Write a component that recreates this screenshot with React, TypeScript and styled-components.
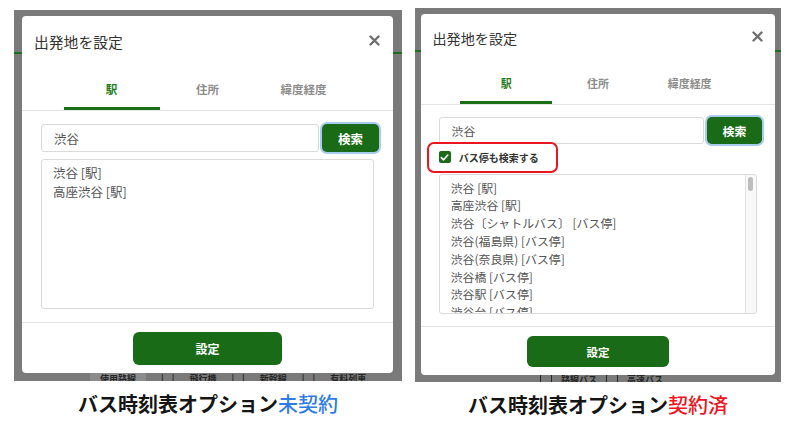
import React from 'react'
import styled, { createGlobalStyle } from 'styled-components'

// sizes inside a modal scale with --s (the right shot is a bit smaller)
const u = (n: number) => `calc(${n}px * var(--s))`

const GREEN = '#196b17'
const FONT = `"Liberation Sans", "Noto Sans CJK JP", sans-serif`

const GlobalStyle = createGlobalStyle`
     html, body {
          margin: 0;
          padding: 0;
          background: #fff;
          font-family: ${FONT};
     }
     * { box-sizing: border-box; }
`

const BUS_RESULTS = [
     '渋谷 [駅]',
     '高座渋谷 [駅]',
     '渋谷〔シャトルバス〕 [バス停]',
     '渋谷(福島県) [バス停]',
     '渋谷(奈良県) [バス停]',
     '渋谷橋 [バス停]',
     '渋谷駅 [バス停]',
     '渋谷台 [バス停]',
]

export default function App() {
     return (
          <>
               <GlobalStyle />
               <Page>
                    <Column $w={388}>
                         <Frame $top={10} $h={371} $pad="6px 9px 8px 8px">
                              <HeaderLine />
                              <SearchModal scale={1} results={['渋谷 [駅]', '高座渋谷 [駅]']} />
                              <Peek $left={76}>
                                   <PeekTab>使用路線</PeekTab>
                                   <Bars>| |</Bars>
                                   <span>飛行機</span>
                                   <Bars>| |</Bars>
                                   <span>新幹線</span>
                                   <Bars>| |</Bars>
                                   <span>有料列車</span>
                              </Peek>
                         </Frame>
                         <Caption>バス時刻表オプション<Accent $color="#2f7be6">未契約</Accent></Caption>
                    </Column>
                    <Column $w={366}>
                         <Frame $top={8} $h={374} $pad="6px 6px 7px 6px">
                              <HeaderLine />
                              <SearchModal scale={0.955} busOption results={BUS_RESULTS} />
                              <Peek $left={125}>
                                   <PeekBox />
                                   <span>路線バス</span>
                                   <PeekBox />
                                   <span>高速バス</span>
                              </Peek>
                         </Frame>
                         <Caption>バス時刻表オプション<Accent $color="#f0141e">契約済</Accent></Caption>
                    </Column>
               </Page>
          </>
     )
}

function SearchModal({ scale, busOption, results }: { scale: number, busOption?: boolean, results: string[] }) {
     return (
          <Modal $s={scale}>
               <Header>
                    <Title>出発地を設定</Title>
                    <Close>
                         <svg width="11" height="11" viewBox="0 0 11 11">
                              <path d="M1.5 1.5 L9.5 9.5 M9.5 1.5 L1.5 9.5" stroke="#6f6f6f" strokeWidth="2.4" strokeLinecap="round" />
                         </svg>
                    </Close>
               </Header>
               <TabBar>
                    <Tab $active>駅</Tab>
                    <Tab>住所</Tab>
                    <Tab>緯度経度</Tab>
               </TabBar>
               <Body>
                    <SearchRow>
                         <SearchInput defaultValue="渋谷" />
                         <SearchButton>検索</SearchButton>
                    </SearchRow>
                    {busOption && (
                         <CheckRow>
                              <CheckBox>
                                   <svg width="9" height="9" viewBox="0 0 9 9">
                                        <path d="M1.3 4.6 L3.6 6.8 L7.8 2" fill="none" stroke="#fff" strokeWidth="1.6" strokeLinecap="round" strokeLinejoin="round" />
                                   </svg>
                              </CheckBox>
                              バス停も検索する
                         </CheckRow>
                    )}
                    <Results $gap={busOption ? 0 : 7}>
                         {results.map((r, i) => <Item key={i}>{r}</Item>)}
                         {busOption && (
                              <ScrollTrack>
                                   <ScrollThumb />
                              </ScrollTrack>
                         )}
                    </Results>
               </Body>
               <Footer>
                    <SetButton>設定</SetButton>
               </Footer>
          </Modal>
     )
}

const Page = styled.div`
     display: flex;
     align-items: flex-start;
     gap: 13px;
     padding-left: 14px;
     width: 800px;
     height: 425px;
     overflow: hidden;
`

const Column = styled.div<{ $w: number }>`
     width: ${p => p.$w}px;
     display: flex;
     flex-direction: column;
     align-items: center;
`

const Frame = styled.div<{ $top: number, $h: number, $pad: string }>`
     position: relative;
     overflow: hidden;
     width: 100%;
     height: ${p => p.$h}px;
     margin-top: ${p => p.$top}px;
     padding: ${p => p.$pad};
     background: #7a7a7a;
`

const HeaderLine = styled.div`
     position: absolute;
     left: 0;
     right: 0;
     top: 42px;
     height: 2px;
     background: #1f6d1f;
`

const Peek = styled.div<{ $left: number }>`
     position: absolute;
     left: ${p => p.$left}px;
     bottom: -3px;
     display: flex;
     align-items: center;
     gap: 9px;
     height: 12px;
     font-size: 9px;
     font-weight: bold;
     color: #262626;
     font-family: "Noto Sans CJK JP", sans-serif;
`

const PeekTab = styled.span`
     background: #8c8c8c;
     padding: 0 10px;
`

const Bars = styled.span`
     word-spacing: 6px;
     margin: 0 6px;
`

const PeekBox = styled.span`
     width: 12px;
     height: 11px;
     border: 1.5px solid #262626;
     border-radius: 2px;
`

const Caption = styled.div`
     margin-top: 11px;
     font-family: "Noto Sans CJK JP", sans-serif;
     font-size: 20px;
     line-height: 24px;
     font-weight: bold;
     color: #151515;
     white-space: nowrap;
`

const Accent = styled.span<{ $color: string }>`
     color: ${p => p.$color};
     font-weight: 500;
`

const Modal = styled.div<{ $s: number }>`
     --s: ${p => p.$s};
     position: relative;
     z-index: 1;
     height: 100%;
     display: flex;
     flex-direction: column;
     background: #fff;
     border-radius: 4px;
     font-family: ${FONT};
`

const Header = styled.div`
     height: ${u(50)};
     flex-shrink: 0;
     display: flex;
     align-items: center;
     justify-content: space-between;
     padding: 0 ${u(13)} 0 ${u(12)};
`

const Title = styled.div`
     font-family: "Noto Sans CJK JP", sans-serif;
     font-size: ${u(14.8)};
     color: #333;
`

const Close = styled.div`
     display: flex;
     margin-top: ${u(-2)};
`

const TabBar = styled.div`
     height: ${u(45)};
     flex-shrink: 0;
     display: flex;
     justify-content: center;
     border-bottom: 1px solid #e4e4e4;
`

const Tab = styled.div<{ $active?: boolean }>`
     width: ${u(96)};
     display: flex;
     justify-content: center;
     padding-top: ${u(15)};
     font-family: "Noto Sans CJK JP", sans-serif;
     font-size: ${u(11.5)};
     line-height: ${u(16)};
     font-weight: bold;
     color: ${p => p.$active ? '#1f7a1c' : '#8d8d8d'};
     border-bottom: ${u(3.5)} solid ${p => p.$active ? '#1a6f17' : 'transparent'};
`

const Body = styled.div`
     flex: 1;
     min-height: 0;
     display: flex;
     flex-direction: column;
     padding: ${u(13)} ${u(14)} 0 ${u(19)};
`

const SearchRow = styled.div`
     display: flex;
     gap: ${u(3)};
     height: ${u(28)};
     flex-shrink: 0;
`

const SearchInput = styled.input`
     flex: 1;
     min-width: 0;
     border: 1px solid #dadada;
     border-radius: 3px;
     padding: 0 ${u(12)};
     font-family: ${FONT};
     font-size: ${u(12.5)};
     color: #555;
     outline: none;
`

const SearchButton = styled.button`
     width: ${u(57)};
     border: none;
     border-radius: ${u(5)};
     background: ${GREEN};
     color: #fff;
     font-family: "Noto Sans CJK JP", sans-serif;
     font-size: ${u(12.5)};
     font-weight: bold;
     box-shadow: 0 0 0 2px #a9cbef;
     padding: 0;
`

const CheckRow = styled.div`
     width: 131px;
     height: 31px;
     margin: -2px 0 1px -12px;
     padding-left: 9.5px;
     flex-shrink: 0;
     display: flex;
     align-items: center;
     gap: 8px;
     border: 2.5px solid #ea1520;
     border-radius: 7px;
     font-family: "Noto Sans CJK JP", sans-serif;
     font-size: 10px;
     font-weight: bold;
     color: #333;
`

const CheckBox = styled.span`
     width: 12px;
     height: 12px;
     border-radius: 2px;
     background: #1d6b1a;
     display: flex;
     align-items: center;
     justify-content: center;
`

const Results = styled.div<{ $gap: number }>`
     position: relative;
     flex: 1;
     min-height: 0;
     margin: ${p => u(p.$gap)} ${u(5)} 0 0;
     border: 1px solid #dadada;
     border-radius: 3px;
     padding: ${u(4)} ${u(11)};
     overflow: hidden;
     font-size: ${u(12.5)};
     line-height: ${u(18.6)};
     color: #555;
`

const ScrollTrack = styled.div`
     position: absolute;
     top: 0;
     right: 0;
     bottom: 0;
     width: 11px;
     padding-top: 2px;
     background: #f8f8f8;
     border-left: 1px solid #e2e2e2;
     display: flex;
     justify-content: center;
`

const ScrollThumb = styled.div`
     width: 5px;
     height: 14px;
     border-radius: 3px;
     background: #bdbdbd;
`

const Item = styled.div`
     white-space: nowrap;
     font-family: "Noto Sans CJK JP", sans-serif;
`

const Footer = styled.div`
     flex-shrink: 0;
     margin-top: ${u(13)};
     border-top: 1px solid #e4e4e4;
     padding: ${u(9)} 0 ${u(8)};
     display: flex;
     justify-content: center;
`

const SetButton = styled.button`
     width: ${u(149)};
     height: ${u(33)};
     border: none;
     border-radius: ${u(6)};
     background: ${GREEN};
     color: #fff;
     font-family: "Noto Sans CJK JP", sans-serif;
     font-size: ${u(12)};
     font-weight: bold;
`
